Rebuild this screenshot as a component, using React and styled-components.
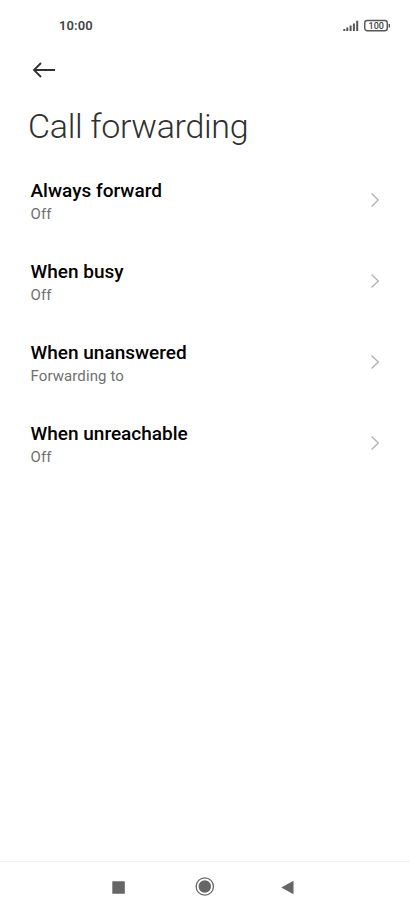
import React from 'react';
import styled, { createGlobalStyle } from 'styled-components';

const Global = createGlobalStyle`
  * { box-sizing: border-box; }
  body { margin: 0; background: #fff; font-family: Roboto, sans-serif; }
`;
const Screen = styled.div`
  width: 100%;
  height: 911px;
  display: flex;
  flex-direction: column;
  background: #fff;
  overflow: hidden;
`;
const StatusBar = styled.div`
  height: 52px;
  flex: none;
  display: flex;
  justify-content: space-between;
  padding: 18px 19px 0 59px;
`;
const Clock = styled.span`
  font-size: 13px;
  line-height: 16px;
  font-weight: 600;
  letter-spacing: 0.1px;
  color: #444;
`;
const Indicators = styled.div`
  display: flex;
  gap: 5px;
`;
const Toolbar = styled.header`
  height: 36px;
  flex: none;
  padding: 8px 0 0 32px;
`;
const BackButton = styled.button`
  display: block;
  border: 0;
  padding: 0;
  background: none;
  svg { display: block; }
`;
const Title = styled.h1`
  margin: 0;
  height: 83px;
  flex: none;
  padding: 18px 0 0 28px;
  font-size: 34px;
  line-height: 40px;
  font-weight: 300;
  letter-spacing: -0.32px;
  color: #303030;
`;
const List = styled.main`
  flex: 1;
`;
const Row = styled.div`
  height: 81px;
  display: flex;
  justify-content: space-between;
  padding: 8px 30px 0 30.5px;
`;
const Label = styled.div`
  font-size: 19px;
  line-height: 24px;
  font-weight: 500;
  color: #000;
`;
const Value = styled.div`
  font-size: 15px;
  line-height: 22px;
  letter-spacing: 0.1px;
  color: #707070;
`;
const Chevron = styled.svg`
  display: block;
  margin-top: 13px;
`;
const NavBar = styled.nav`
  height: 50px;
  flex: none;
  display: flex;
  border-top: 1px solid #f2f2f2;
  padding: 15px 0 0 112px;
  gap: 66px;
  svg { display: block; }
`;

const items = [
  ['Always forward', 'Off'],
  ['When busy', 'Off'],
  ['When unanswered', 'Forwarding to'],
  ['When unreachable', 'Off'],
];

export default function App() {
  return (
    <Screen>
      <Global />
      <StatusBar>
        <Clock>10:00</Clock>
        <Indicators>
          <svg width="16" height="16" fill="#555">
            <path d="M.3 11h2v2h-2zM3.3 9.6h2V13h-2zM6.6 7.6h2V13h-2zM9.9 5.4h2V13h-2zM13.2 2.8h2V13h-2z" />
          </svg>
          <svg width="27" height="16">
            <rect x=".75" y="2.5" width="22.5" height="10.3" rx="2.5" fill="none" stroke="#555" strokeWidth="1.4" />
            <rect x="24.6" y="6" width="1.4" height="3.5" fill="#555" />
            <text x="12.2" y="10.9" textAnchor="middle" fontSize="9" fontWeight="500" fill="#444">100</text>
          </svg>
        </Indicators>
      </StatusBar>
      <Toolbar>
        <BackButton aria-label="Back">
          <svg width="24" height="20" fill="none" stroke="#303030" strokeWidth="1.8">
            <path d="M23 10H2M9 3L2 10l7 7" />
          </svg>
        </BackButton>
      </Toolbar>
      <Title>Call forwarding</Title>
      <List>
        {items.map(([label, value]) => (
          <Row key={label}>
            <div>
              <Label>{label}</Label>
              <Value>{value}</Value>
            </div>
            <Chevron width="10" height="16" fill="none" stroke="#b0b0b0" strokeWidth="1.3">
              <path d="M1.5 1.5L8.3 8l-6.8 6.5" />
            </Chevron>
          </Row>
        ))}
      </List>
      <NavBar>
        <svg width="17" height="20" fill="#666"><rect x=".3" y="4.2" width="12.5" height="12.6" rx=".4" /></svg>
        <svg width="20" height="20" fill="#666"><circle cx="9.8" cy="9.5" r="6.2" /><circle cx="9.8" cy="9.5" r="8.7" fill="none" stroke="#666" strokeWidth="1.3" /></svg>
        <svg width="14" height="20" fill="#666"><path d="M.3 10.5L12.5 3.8v13.5z" /></svg>
      </NavBar>
    </Screen>
  );
}
